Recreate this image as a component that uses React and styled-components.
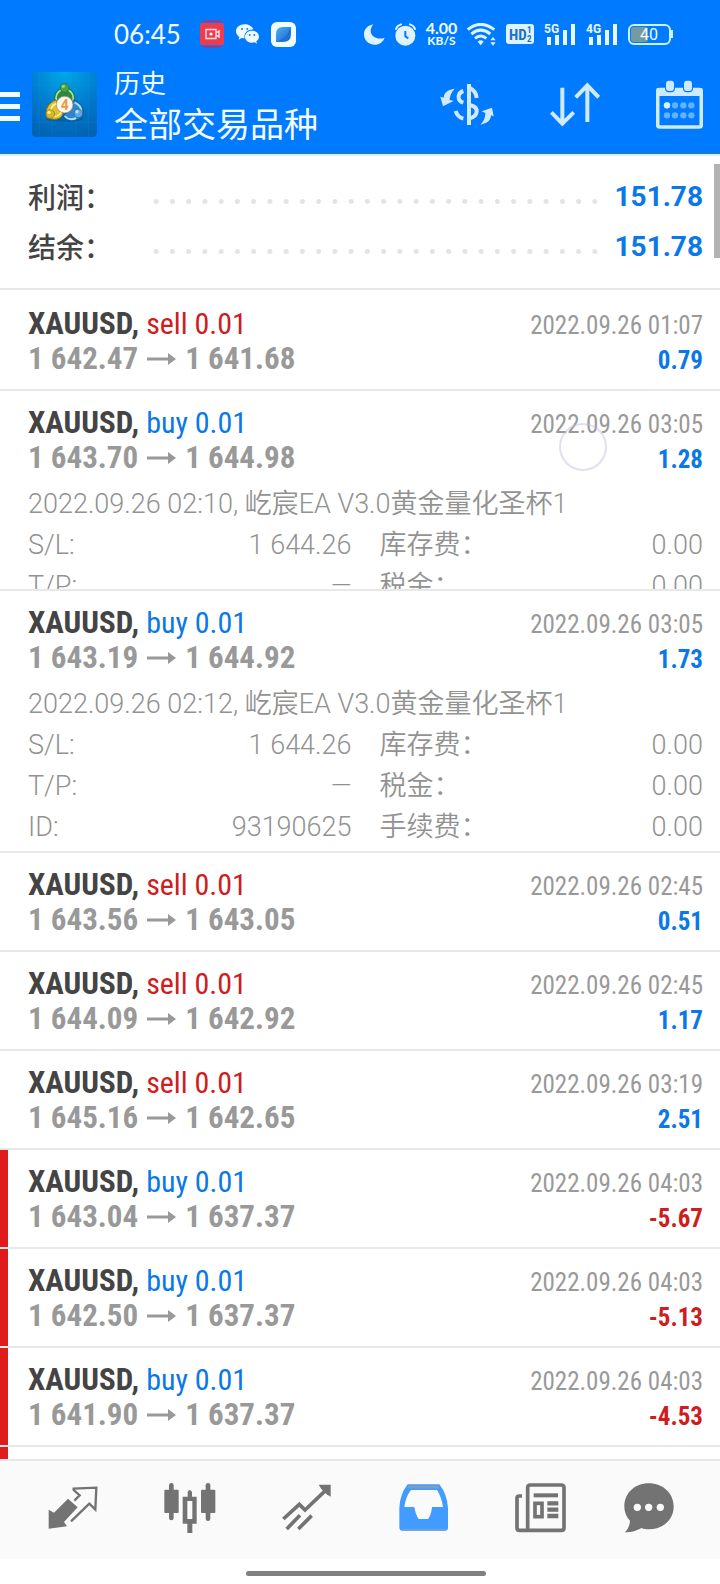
import React from "react";
import styled, { createGlobalStyle } from "styled-components";

const GlobalStyle = createGlobalStyle`
  * { box-sizing: border-box; }
  body { margin: 0; background: #fff; }
  button { border: 0; padding: 0; background: none; color: inherit; font: inherit; cursor: pointer; }
`;

const sans = `Roboto, "Noto Sans CJK SC", sans-serif`;
const narrow = `"Roboto Condensed", "Liberation Sans Narrow", Roboto, sans-serif`;
const blue = "#0a78e6";
const red = "#d01c1c";

const Screen = styled.div`
  display: flex;
  flex-direction: column;
  min-height: 100vh;
  background: #fff;
  font-family: ${sans};
`;

const Header = styled.header`
  position: relative;
  z-index: 1;
  background: #007bff;
  color: #f2fbff;
  padding-bottom: 13px;
  border-bottom: 1px solid #3c6ea6;
  box-shadow: 0 2px #c9f5ff;
`;

const StatusBar = styled.div`
  display: flex;
  align-items: center;
  justify-content: space-between;
  height: 68px;
  padding: 0 46px 0 114px;
`;

const StatusGroup = styled.div`
  display: flex;
  align-items: center;
  gap: ${(p) => p.$gap}px;
`;

const Clock = styled.time`
  font: 400 26px/32px Lato, sans-serif;
  margin-right: 7px;
`;

const NetSpeed = styled.div`
  width: 35px;
  margin: 0 -2px;
  text-align: center;
  font: 700 16px/13px Lato, sans-serif;
  small { display: block; font-size: 12px; line-height: 13px; }
`;

const TitleBar = styled.div`
  display: flex;
  align-items: center;
  height: 72px;
  padding-right: 17px;
`;

const MenuButton = styled.button`
  display: flex;
  flex-direction: column;
  gap: 7px;
  width: 20px;
  margin-right: 12px;
  padding-top: 5px;
  span { height: 5px; background: currentColor; }
`;

const Titles = styled.div`
  flex: 1;
  margin-left: 17px;
  padding-top: 3px;
`;

const Section = styled.div`
  font-size: 26px;
  line-height: 38px;
`;

const Heading = styled.h1`
  margin: 0;
  font-size: 34px;
  font-weight: 400;
  line-height: 44px;
`;

const Actions = styled.div`
  display: flex;
  align-items: center;
  gap: 56px;
  color: #cfe9ff;
  button, svg { display: block; }
`;

const Main = styled.main`
  position: relative;
  flex: 1;
  display: flex;
  flex-direction: column;
`;

const ScrollThumb = styled.div`
  position: absolute;
  top: 10px;
  right: 0;
  width: 6px;
  height: 94px;
  background: #b3b3b3;
`;

const Summary = styled.dl`
  margin: 0;
  padding: 17px 17px 17px 28px;
  border-bottom: 2px solid #e8e8e8;
`;

const SummaryLine = styled.div`
  display: flex;
  align-items: center;
  height: 50px;
  font-size: 28px;
  dt { width: 120px; color: #444; font-weight: 500; }
  dd { margin: 0 0 0 12px; color: ${blue}; font-weight: 700; }
`;

const Leader = styled.span`
  flex: 1;
  height: 5px;
  margin-top: 10px;
  background: radial-gradient(circle, #e3e3e3 2px, transparent 3px) left center / 16px 5px;
  background-repeat: round no-repeat;
`;

const List = styled.ul`
  flex: 1;
  display: flex;
  flex-direction: column;
  margin: 0;
  padding: 2px 0 0;
  list-style: none;
`;

const Deal = styled.li`
  position: relative;
  overflow: hidden;
  height: ${(p) => (p.$folding ? "200px" : "auto")};
  padding: 14px 17px ${(p) => (p.$open ? 3 : 13)}px 28px;
  border-bottom: 2px solid #e8e8e8;
  background: ${(p) => (p.$loss ? "linear-gradient(#e01b1b, #e01b1b) left / 8px 100% no-repeat" : "none")};
`;

const NextDeal = styled.li`
  flex: 1;
  min-height: 12px;
  background: linear-gradient(#e01b1b, #e01b1b) left / 8px 100% no-repeat;
`;

const DealHead = styled.div`
  display: flex;
  justify-content: space-between;
  height: 70px;
  font-family: ${narrow};
  line-height: 35px;
`;

const Symbol = styled.div`
  font-size: 31px;
  font-weight: 700;
  color: #444;
`;

const Side = styled.span`
  font-size: 30px;
  font-weight: 400;
  color: ${(p) => (p.$side === "sell" ? red : blue)};
`;

const Prices = styled.div`
  display: flex;
  align-items: center;
  gap: 9px;
  font-size: 31px;
  font-weight: 700;
  color: #999;
`;

const Result = styled.div`
  padding-top: 2px;
  text-align: right;
  font-size: 25px;
  color: #999;
`;

const Profit = styled.div`
  font-weight: 700;
  color: ${(p) => (p.$loss ? red : blue)};
`;

const Details = styled.div`
  margin-top: 9px;
  font-size: 27px;
  font-weight: 350;
  line-height: 41px;
  color: #929292;
`;

const DetailGrid = styled.dl`
  display: grid;
  grid-template-columns: 1fr 1fr;
  column-gap: 28px;
  margin: 0;
  div { display: flex; justify-content: space-between; height: 41px; }
  dd { margin: 0; }
`;

const TouchRing = styled.div`
  position: absolute;
  top: 32px;
  right: 113px;
  width: 48px;
  height: 48px;
  border: 2px solid rgba(190, 185, 220, 0.45);
  border-radius: 50%;
`;

const TabBar = styled.nav`
  display: grid;
  grid-template-columns: repeat(5, 13fr) 11fr;
  height: 100px;
  padding: 0 22px 5px 14px;
  border-top: 2px solid #e8e8e8;
  background: #fafafa;
`;

const Tab = styled.button`
  display: flex;
  align-items: center;
  justify-content: center;
  color: ${(p) => (p.$active ? "#429cff" : "#737373")};
`;

const HomeArea = styled.div`
  display: flex;
  justify-content: center;
  padding: 12px 0 8px 12px;
  background: #fff;
`;

const HomeBar = styled.div`
  width: 34%;
  height: 5px;
  border-radius: 3px;
  background: #808080;
`;

const Logo = () => (
  <svg width="65" height="65" viewBox="0 0 195 195" aria-label="MetaTrader 4">
    <defs>
      <radialGradient id="bg" cx="50%" cy="0%" r="100%">
        <stop offset="0" stopColor="#00a8e8" />
        <stop offset="0.6" stopColor="#0078cc" />
        <stop offset="1" stopColor="#0064b4" />
      </radialGradient>
    </defs>
    <rect width="195" height="195" rx="12" fill="url(#bg)" />
    <path d="M22 0V195M60 0V195M132 0V195M170 0V195M0 40H195M0 150H195" stroke="#2a9be0" strokeWidth="1.5" opacity="0.35" />
    <ellipse cx="98" cy="140" rx="56" ry="10" fill="#004a80" opacity="0.4" />
    <circle cx="98" cy="78" r="26" fill="#2d8a3c" stroke="#b7e08a" strokeWidth="5" />
    <circle cx="98" cy="78" r="31" fill="none" stroke="#2c6b35" strokeWidth="2" />
    <path d="M45 138C36 112 50 92 72 84L94 120C92 138 76 148 45 138Z" fill="#e0c22e" stroke="#7d7220" strokeWidth="3" />
    <path d="M56 116C58 104 66 96 76 94M64 134C76 134 84 128 88 120" stroke="#fff29a" strokeWidth="5" fill="none" />
    <path d="M124 84C148 92 160 112 150 136C136 148 112 148 94 132L112 112Z" fill="#2f86cc" stroke="#1d568c" strokeWidth="3" />
    <path d="M128 92C142 98 148 106 148 118M98 132C106 142 120 144 132 138" stroke="#a9dcfa" strokeWidth="6" fill="none" />
    <circle cx="98" cy="48" r="13" fill="#4aa347" stroke="#2a6930" strokeWidth="2" />
    <circle cx="94" cy="43" r="5" fill="#9bd97c" />
    <circle cx="55" cy="126" r="13" fill="#d8b624" stroke="#8a7719" strokeWidth="2" />
    <circle cx="51" cy="121" r="5" fill="#fff0a0" />
    <circle cx="139" cy="124" r="13" fill="#5aa8e4" stroke="#235f9a" strokeWidth="2" />
    <circle cx="135" cy="119" r="5" fill="#bfe3fb" />
    <circle cx="98" cy="98" r="25" fill="#fbf7ee" stroke="#8b8b78" strokeWidth="2" />
    <text x="98" y="113" textAnchor="middle" fontFamily="Roboto, sans-serif" fontWeight="700" fontSize="42" fill="#e99a45">4</text>
  </svg>
);

const RecordIcon = () => (
  <svg width="24" height="28" viewBox="0 0 24 28">
    <path d="M3 1H21M3 27H21" stroke="#c02c68" strokeWidth="1.5" />
    <rect y="3" width="24" height="22" rx="2" fill="#ef3b4e" />
    <path d="M6 9.500H16V18.500H6ZM16 13L19 11V17L16 15" stroke="#ffe1e4" strokeWidth="1.400" fill="none" />
    <circle cx="11" cy="14" r="1.600" fill="#fff" />
  </svg>
);

const WeChatIcon = () => (
  <svg width="23" height="20" viewBox="0 0 69 60" fill="#effaff">
    <path d="M26 1C11 1 0 10 0 22C0 29 4 35 10 39L8 47L17 42C20 43 23 43 26 43C22 26 36 15 52 17C49 7 38 1 26 1Z" />
    <path d="M48 20C36 20 27 28 27 38C27 48 36 56 48 56C51 56 53 55 56 55L63 59L61 52C66 48 69 43 69 38C69 28 60 20 48 20Z" />
    <g fill="#1a83f0"><circle cx="18" cy="15" r="3" /><circle cx="34" cy="15" r="3" /><circle cx="41" cy="33" r="3" /><circle cx="55" cy="33" r="3" /></g>
  </svg>
);

const BrowserIcon = () => (
  <svg width="25" height="25" viewBox="0 0 25 25">
    <defs>
      <linearGradient id="leaf" x1="0" y1="0" x2="1" y2="1">
        <stop offset="0" stopColor="#4fb2e8" />
        <stop offset="0.5" stopColor="#2f8ae0" />
        <stop offset="1" stopColor="#1b55c8" />
      </linearGradient>
    </defs>
    <rect width="25" height="25" rx="6" fill="#f0fbff" />
    <path d="M5 12Q5 5 12 5H20V12Q20 20 12 20H5Z" fill="url(#leaf)" />
    <path d="M8 19Q17 17 19 8" stroke="#1f5fd0" strokeWidth="1" fill="none" />
  </svg>
);

const MoonIcon = () => (
  <svg width="21" height="21" viewBox="0 0 63 63" fill="#dff2ff">
    <path d="M28 1C8 5 0 18 0 31C0 49 14 62 32 62C46 62 57 54 62 41C46 48 22 42 20 22C20 13 23 7 28 1Z" />
  </svg>
);

const AlarmIcon = () => (
  <svg width="21" height="23" viewBox="0 0 63 69">
    <circle cx="31" cy="38" r="30" fill="#dff2ff" />
    <path d="M3 18Q6 8 18 4M60 18Q57 8 45 4" stroke="#dff2ff" strokeWidth="6" fill="none" strokeLinecap="round" />
    <path d="M31 24V40L40 46" stroke="#007bff" strokeWidth="6" fill="none" />
  </svg>
);

const WifiIcon = () => (
  <svg width="29" height="23" viewBox="0 0 87 69" fill="none" stroke="#dff2ff">
    <path d="M2 20Q40 -12 82 20M13 33Q41 10 70 33M24 46Q41 32 58 46" strokeWidth="9" />
    <path d="M32 56Q41 48 50 56L41 67Z" fill="#dff2ff" stroke="none" />
    <path d="M70 52L78 42L86 52ZM70 58L78 68L86 58Z" fill="#dff2ff" stroke="none" />
  </svg>
);

const HdIcon = () => (
  <svg width="28" height="20" viewBox="0 0 28 20">
    <rect width="28" height="20" rx="3" fill="#dff2ff" />
    <g fill="#1a6fd0" fontFamily="Roboto Condensed, sans-serif" fontWeight="700">
      <text x="3" y="16" fontSize="15">HD</text>
      <text x="21" y="9" fontSize="9">1</text>
      <text x="21" y="18" fontSize="9">2</text>
    </g>
  </svg>
);

const SignalIcon = ({ label }) => (
  <svg width="32" height="23" viewBox="0 0 32 23" fill="#e8f7ff">
    <text x="0" y="10" fontFamily="Roboto, sans-serif" fontWeight="700" fontSize="12">{label}</text>
    <rect x="3" y="14" width="4" height="8" />
    <rect x="11" y="12" width="4" height="10" />
    <rect x="19" y="7" width="4" height="15" />
    <rect x="27" y="1" width="4" height="21" />
  </svg>
);

const BatteryIcon = () => (
  <svg width="46" height="21" viewBox="0 0 46 21">
    <rect x="1" y="1" width="41" height="19" rx="5" fill="none" stroke="#c9f3ff" strokeWidth="2" />
    <rect x="3" y="3" width="17" height="15" rx="3" fill="#759aa0" />
    <rect x="43" y="6" width="2" height="8" fill="#c9f3ff" />
    <text x="21" y="16" textAnchor="middle" fontFamily="Roboto, sans-serif" fontSize="16" fill="#effaff">40</text>
  </svg>
);

const CurrencyIcon = () => (
  <svg width="54" height="43" viewBox="241 246 162 129" fill="none" stroke="currentColor" strokeWidth="12">
    <path d="M328 249V372" />
    <path d="M311 270C292 277 292 299 311 305M288 330C292 343 299 350 311 353" />
    <path d="M332 262Q349 270 351 291M330 312C346 315 352 321 351 332C350 343 343 349 330 352" />
    <path d="M285 263C262 267 253 275 252 290L242 287L250 316L282 300L270 297C270 284 276 272 285 263Z" fill="currentColor" stroke="none" />
    <path d="M362 371C383 367 393 359 394 343L402 346L397 320L366 331L377 336C377 350 372 362 362 371Z" fill="currentColor" stroke="none" />
  </svg>
);

const SortIcon = () => (
  <svg width="50" height="45" viewBox="565 246 150 135" fill="none" stroke="currentColor" strokeWidth="12">
    <path d="M602 263V374M569 337L602 371L636 337M677 366V256M642 292L677 256L711 292" />
  </svg>
);

const CalendarIcon = () => (
  <svg width="47" height="49" viewBox="888 238 141 147">
    <rect x="893" y="267" width="131" height="112" rx="6" fill="none" stroke="currentColor" strokeWidth="11" />
    <path d="M890 262H1027V286H890Z" fill="currentColor" />
    <rect x="915" y="236" width="30" height="39" rx="12" fill="#007bff" />
    <rect x="969" y="236" width="30" height="39" rx="12" fill="#007bff" />
    <rect x="918" y="240" width="24" height="31" rx="9" fill="currentColor" />
    <rect x="972" y="240" width="24" height="31" rx="9" fill="currentColor" />
    <g fill="#61b2ff">
      {[314, 344].map((y) => [921, 945, 970, 994].map((x) => <circle key={x + "-" + y} cx={x} cy={y} r="9.500" />))}
    </g>
    <circle cx="921" cy="314" r="9.500" fill="#d5f4ff" />
  </svg>
);

const PriceArrow = () => (
  <svg width="29" height="12" viewBox="0 0 29 12" fill="#999">
    <path d="M0 4.500H21V0L29 6L21 12V7.500H0Z" />
  </svg>
);

const QuotesIcon = () => (
  <svg width="50" height="44" viewBox="148 143 150 132">
    <path d="M150 214L166 223L208 181L237 207L196 251L205 264L150 271Z" fill="currentColor" />
    <path d="M227 187L243 171L225 155V151L293 148L290 214L272 196L217 249" fill="none" stroke="currentColor" strokeWidth="7" />
  </svg>
);

const CandlesIcon = () => (
  <svg width="52" height="50" viewBox="495 129 156 150" fill="currentColor">
    <rect x="496" y="149" width="43" height="70" rx="3" />
    <rect x="510" y="129" width="14" height="112" rx="7" />
    <rect x="606" y="149" width="43" height="70" rx="3" />
    <rect x="620" y="129" width="14" height="114" rx="7" />
    <path d="M566 156Q572 144 579 156V170H593V251H580V279H565V251H551V170H566ZM565 183V237H580V183Z" fillRule="evenodd" />
  </svg>
);

const TradeIcon = () => (
  <svg width="50" height="47" viewBox="850 135 150 141" fill="none" stroke="currentColor" strokeWidth="11">
    <path d="M854 240L902 196L919 213L984 151M864 270L904 229M899 270L939 230" />
    <path d="M960 137H996V173L984 166L968 150Z" fill="currentColor" stroke="none" />
  </svg>
);

const InboxIcon = () => (
  <svg width="49" height="47" viewBox="122 132 147 141">
    <path d="M148 133H243Q267 164 269 204V264Q268 272 260 272H131Q124 272 123 264V204Q124 164 148 133ZM158 150Q142 170 138 201H168Q172 224 181 237H209Q219 224 221 201H254Q249 169 236 150Z" fill="currentColor" fillRule="evenodd" />
    <path d="M150 141H242" stroke="#7e9fb9" strokeWidth="8" />
    <path d="M129 269H263" stroke="#6aa2dc" strokeWidth="5" />
  </svg>
);

const NewsIcon = () => (
  <svg width="51" height="50" viewBox="471 128 153 150" fill="none" stroke="currentColor" strokeWidth="11">
    <path d="M492 167H484Q477 167 477 174V262Q477 270 485 270H610Q618 270 618 262V142Q618 134 610 134H517Q509 134 509 142V270" />
    <path d="M527 165H600" strokeWidth="12" />
    <rect x="531" y="189" width="21" height="40" />
    <path d="M568 189H601M568 208H601M568 227H601" strokeWidth="13" />
  </svg>
);

const ChatIcon = () => (
  <svg width="50" height="50" viewBox="794 127 150 150">
    <path d="M868 128C826 128 795 158 795 198C795 213 801 229 812 240C811 256 805 268 796 275C818 275 832 270 846 262C854 265 861 266 868 266C911 266 943 237 943 198C943 158 911 128 868 128Z" fill="currentColor" />
    <g fill="#fafafa"><circle cx="834" cy="200" r="11" /><circle cx="868" cy="200" r="11" /><circle cx="903" cy="200" r="11" /></g>
  </svg>
);

const deals = [
  { side: "sell", from: "1 642.47", to: "1 641.68", time: "2022.09.26 01:07", profit: "0.79" },
  { side: "buy", from: "1 643.70", to: "1 644.98", time: "2022.09.26 03:05", profit: "1.28", opened: "02:10", folding: true },
  { side: "buy", from: "1 643.19", to: "1 644.92", time: "2022.09.26 03:05", profit: "1.73", opened: "02:12", id: "93190625" },
  { side: "sell", from: "1 643.56", to: "1 643.05", time: "2022.09.26 02:45", profit: "0.51" },
  { side: "sell", from: "1 644.09", to: "1 642.92", time: "2022.09.26 02:45", profit: "1.17" },
  { side: "sell", from: "1 645.16", to: "1 642.65", time: "2022.09.26 03:19", profit: "2.51" },
  { side: "buy", from: "1 643.04", to: "1 637.37", time: "2022.09.26 04:03", profit: "-5.67" },
  { side: "buy", from: "1 642.50", to: "1 637.37", time: "2022.09.26 04:03", profit: "-5.13" },
  { side: "buy", from: "1 641.90", to: "1 637.37", time: "2022.09.26 04:03", profit: "-4.53" },
];

const Pair = ({ label, value }) => (
  <div>
    <dt>{label}</dt>
    <dd>{value}</dd>
  </div>
);

function DealRow({ deal }) {
  const loss = deal.profit.startsWith("-");
  return (
    <Deal $open={Boolean(deal.opened)} $folding={deal.folding} $loss={loss}>
      <DealHead>
        <div>
          <Symbol>
            XAUUSD, <Side $side={deal.side}>{deal.side} 0.01</Side>
          </Symbol>
          <Prices>
            <span>{deal.from}</span>
            <PriceArrow />
            <span>{deal.to}</span>
          </Prices>
        </div>
        <Result>
          <time>{deal.time}</time>
          <Profit $loss={loss}>{deal.profit}</Profit>
        </Result>
      </DealHead>
      {deal.opened && (
        <Details>
          2022.09.26 {deal.opened}, 屹宸EA V3.0黄金量化圣杯1
          <DetailGrid>
            <Pair label="S/L:" value="1 644.26" />
            <Pair label="库存费：" value="0.00" />
            <Pair label="T/P:" value="—" />
            <Pair label="税金：" value="0.00" />
            {deal.id && <Pair label="ID:" value={deal.id} />}
            {deal.id && <Pair label="手续费：" value="0.00" />}
          </DetailGrid>
        </Details>
      )}
      {deal.folding && <TouchRing />}
    </Deal>
  );
}

const tabs = [
  ["行情", QuotesIcon],
  ["图表", CandlesIcon],
  ["交易", TradeIcon],
  ["历史", InboxIcon],
  ["新闻", NewsIcon],
  ["消息", ChatIcon],
];

export default function App() {
  return (
    <Screen>
      <GlobalStyle />
      <Header>
        <StatusBar>
          <StatusGroup $gap={12}>
            <Clock>06:45</Clock>
            <RecordIcon />
            <WeChatIcon />
            <BrowserIcon />
          </StatusGroup>
          <StatusGroup $gap={10}>
            <MoonIcon />
            <AlarmIcon />
            <NetSpeed>4.00<small>KB/S</small></NetSpeed>
            <WifiIcon />
            <HdIcon />
            <SignalIcon label="5G" />
            <SignalIcon label="4G" />
            <BatteryIcon />
          </StatusGroup>
        </StatusBar>
        <TitleBar>
          <MenuButton aria-label="菜单"><span /><span /><span /></MenuButton>
          <Logo />
          <Titles>
            <Section>历史</Section>
            <Heading>全部交易品种</Heading>
          </Titles>
          <Actions>
            <button aria-label="交易品种"><CurrencyIcon /></button>
            <button aria-label="排序"><SortIcon /></button>
            <button aria-label="日期"><CalendarIcon /></button>
          </Actions>
        </TitleBar>
      </Header>
      <Main>
        <ScrollThumb />
        <Summary>
          <SummaryLine><dt>利润：</dt><Leader /><dd>151.78</dd></SummaryLine>
          <SummaryLine><dt>结余：</dt><Leader /><dd>151.78</dd></SummaryLine>
        </Summary>
        <List>
          {deals.map((deal, i) => <DealRow key={i} deal={deal} />)}
          <NextDeal />
        </List>
      </Main>
      <TabBar>
        {tabs.map(([name, Icon]) => (
          <Tab key={name} aria-label={name} $active={Icon === InboxIcon}><Icon /></Tab>
        ))}
      </TabBar>
      <HomeArea><HomeBar /></HomeArea>
    </Screen>
  );
}
